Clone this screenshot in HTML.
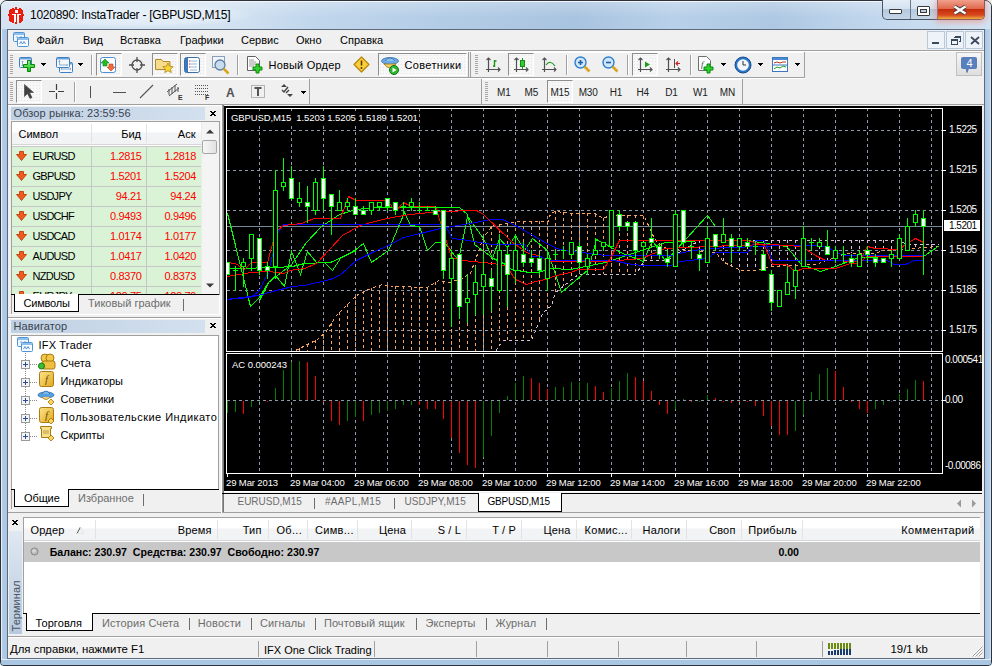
<!DOCTYPE html><html><head><meta charset="utf-8"><style>
html,body{margin:0;padding:0;width:992px;height:666px;overflow:hidden;background:#f0f0f0}
body{position:relative;font-family:"Liberation Sans",sans-serif}
div{position:absolute;box-sizing:border-box}
.t{white-space:nowrap}
svg{position:absolute;overflow:visible}
</style></head><body>

<div style="left:0px;top:0px;width:992px;height:666px;background:#b0cbe6;border:1px solid #2e3238;border-radius:7px 7px 4px 4px"></div>
<div style="left:1px;top:1px;width:990px;height:28px;background:linear-gradient(90deg,#d6e4f2 0%,#d4e3f2 22%,#c0d6ec 32%,#b3cce6 45%,#a9c4e0 58%,#b8d0e9 68%,#aec8e3 78%,#c4d9ee 90%,#d2e3f3 100%);border-radius:6px 6px 0 0;border-top:1px solid #eef4fa"></div>
<div style="left:1px;top:1px;width:990px;height:28px;background:linear-gradient(rgba(255,255,255,0.25),rgba(255,255,255,0) 60%);border-radius:6px 6px 0 0"></div>
<div style="left:20px;top:3px;width:230px;height:24px;background:radial-gradient(ellipse at center,rgba(235,243,250,0.85) 0%,rgba(235,243,250,0.5) 55%,rgba(235,243,250,0) 75%)"></div>
<div style="left:1px;top:29px;width:6px;height:630px;background:linear-gradient(90deg,#e6f0f8 0 1px,#b2cde8 1px,#a9c6e3)"></div>
<div style="left:985px;top:29px;width:6px;height:630px;background:linear-gradient(90deg,#aac7e4,#b8d2ec 80%,#e0ecf7)"></div>
<div style="left:1px;top:659px;width:990px;height:6px;background:linear-gradient(#e4eef8 0 1px,#a9c6e2 1px);border-radius:0 0 3px 3px"></div>
<div style="left:7px;top:29px;width:978px;height:630px;border:1px solid #5c6a7c;background:#f0f0f0"></div>
<div class="t" style="left:30px;top:8.84px;font-size:12px;line-height:12px;color:#000;letter-spacing:-0.25px">1020890: InstaTrader - [GBPUSD,M15]</div>
<svg width="20" height="20" style="left:6px;top:5px" shape-rendering="crispEdges"><g fill="#ec1c0c"><rect x="4" y="4" width="12" height="13"/><rect x="3" y="6" width="14" height="9"/><rect x="2" y="9" width="16" height="2"/><rect x="9" y="2" width="2" height="2"/><rect x="6" y="3" width="2" height="1"/><rect x="13" y="3" width="2" height="1"/><rect x="9" y="17" width="2" height="2"/><rect x="6" y="17" width="2" height="1"/><rect x="13" y="17" width="2" height="1"/><rect x="3" y="5" width="1" height="1"/><rect x="16" y="5" width="1" height="1"/><rect x="3" y="15" width="1" height="1"/><rect x="16" y="15" width="1" height="1"/></g><g fill="#fff"><rect x="9" y="5" width="3" height="3"/><rect x="6" y="9" width="4" height="1"/><rect x="11" y="9" width="4" height="1"/><rect x="8" y="10" width="2" height="7"/><rect x="11" y="10" width="2" height="7"/></g></svg>
<div style="left:882px;top:0px;width:103px;height:20px;border:1px solid #4a5566;border-top:none;border-radius:0 0 5px 5px;overflow:hidden;background:linear-gradient(#e4edf7 0%,#d5e2f0 45%,#b6c9dd 50%,#c5d6e8 100%)"></div>
<div style="left:910px;top:0px;width:1px;height:19px;background:#6a7a8c"></div>
<div style="left:937px;top:0px;width:1px;height:19px;background:#6a7a8c"></div>
<div style="left:938px;top:0px;width:46px;height:19px;background:linear-gradient(#f2a08c 0%,#e06a4e 45%,#c62c0c 50%,#d84a20 80%,#f0b040 100%);border-radius:0 0 4px 0;box-shadow:0 1px 6px 2px rgba(255,110,80,0.5)"></div>
<svg width="14" height="10" style="left:953px;top:5px"><path d="M1.5 1.5l11 7M12.5 1.5l-11 7" stroke="#3a3a3a" stroke-width="4"/><path d="M1.5 1.5l11 7M12.5 1.5l-11 7" stroke="#fff" stroke-width="2.4"/></svg>
<div style="left:889px;top:9px;width:13px;height:5px;background:#fff;border:1px solid #3a3a3a;border-radius:1px"></div>
<div style="left:917px;top:6px;width:13px;height:10px;background:#fff;border:1px solid #3a3a3a;border-radius:1px"></div>
<div style="left:920px;top:9px;width:7px;height:4px;background:#b8cde2;border:1px solid #3a3a3a"></div>
<div style="left:927px;top:31px;width:18px;height:18px;border:1px solid #b5c8dc;background:#eef3f9"></div>
<div style="left:946px;top:31px;width:18px;height:18px;border:1px solid #b5c8dc;background:#eef3f9"></div>
<div style="left:965px;top:31px;width:18px;height:18px;border:1px solid #b5c8dc;background:#eef3f9"></div>
<div style="left:932px;top:42px;width:7px;height:2px;background:#3a4a5a"></div>
<svg width="10" height="9" style="left:951px;top:36px" shape-rendering="crispEdges"><path d="M3.5 0.5h6v5h-2M0.5 3.5h6v5h-6z" stroke="#3a4a5a" fill="none"/><path d="M3 1h6M0 4h6" stroke="#3a4a5a"/></svg>
<svg width="10" height="9" style="left:970px;top:36px"><path d="M1 1l8 7M9 1l-8 7" stroke="#3a4a5a" stroke-width="1.8"/></svg>
<svg width="16" height="15" style="left:13px;top:32px" viewBox="0 0 16 15"><rect x="0.5" y="0.5" width="11" height="9" rx="1" fill="#eef6fd" stroke="#4f93d6"/><rect x="1" y="1" width="10" height="2" fill="#8ec0ee"/><path d="M3 5h2M7 5h2" stroke="#6a9ad0" stroke-width="0.8"/><rect x="4.5" y="5.5" width="11" height="9" rx="1" fill="#f6fbff" stroke="#4f93d6"/><rect x="5" y="6" width="10" height="2" fill="#8ec0ee"/><path d="M6.5 12l1.5-2.5 1.5 2.5 1.5-2.5 1.5 2.5" stroke="#3a78c0" fill="none" stroke-width="0.8"/></svg>
<div class="t" style="left:36.5px;top:34.69px;font-size:11px;line-height:11px;color:#000;">Файл</div>
<div class="t" style="left:83px;top:34.69px;font-size:11px;line-height:11px;color:#000;">Вид</div>
<div class="t" style="left:120px;top:34.69px;font-size:11px;line-height:11px;color:#000;">Вставка</div>
<div class="t" style="left:180px;top:34.69px;font-size:11px;line-height:11px;color:#000;">Графики</div>
<div class="t" style="left:241px;top:34.69px;font-size:11px;line-height:11px;color:#000;">Сервис</div>
<div class="t" style="left:296px;top:34.69px;font-size:11px;line-height:11px;color:#000;">Окно</div>
<div class="t" style="left:340px;top:34.69px;font-size:11px;line-height:11px;color:#000;">Справка</div>
<div style="left:8px;top:50px;width:976px;height:1px;background:#a0a0a0"></div>
<div style="left:8px;top:51px;width:976px;height:1px;background:#fff"></div>
<div style="left:8px;top:77px;width:797px;height:1px;background:#a0a0a0"></div>
<div style="left:8px;top:78px;width:797px;height:1px;background:#fff"></div>
<div style="left:8px;top:104px;width:976px;height:1px;background:#a0a0a0"></div>
<div style="left:9px;top:52px;width:460px;height:1px;background:#fff"></div>
<div style="left:468px;top:52px;width:1px;height:25px;background:#a0a0a0"></div>
<div style="left:10px;top:55px;width:3px;height:20px;background:repeating-linear-gradient(#a8a8a8 0 1px,transparent 1px 2px)"></div>
<svg width="18" height="16" style="left:19px;top:57px" viewBox="0 0 18 16"><defs><linearGradient id="gp" x1="0" y1="0" x2="0" y2="1"><stop offset="0" stop-color="#8ef58e"/><stop offset="1" stop-color="#12c012"/></linearGradient></defs><rect x="0.5" y="0.5" width="12" height="10" rx="1" fill="#f4f8fc" stroke="#3b7fc4"/><rect x="1" y="1" width="11" height="1.5" fill="#6aa2dc"/><path d="M3.5 4v5M2.5 5l1-1 1 1M2.5 8l1 1 1-1" stroke="#7f9cbc" stroke-width="0.8" fill="none"/><path d="M8.5 3.5h3v4h4v3h-4v4h-3v-4h-4v-3h4z" fill="url(#gp)" stroke="#0b850b"/></svg>
<svg width="6" height="4" style="left:41px;top:63px" shape-rendering="crispEdges"><path d="M0 0h5v1h-1v1h-1v1h-1v-1h-1v-1h-1z" fill="#000"/></svg>
<svg width="18" height="17" style="left:56px;top:57px" viewBox="0 0 18 17"><rect x="3.5" y="5.5" width="13" height="10" rx="1" fill="#f4f8fc" stroke="#3b7fc4"/><rect x="4" y="6" width="12" height="1.5" fill="#6aa2dc"/><path d="M5 12h10M6 11l-1 1 1 1M14 11l1 1-1 1" stroke="#7f9cbc" stroke-width="0.8" fill="none"/><rect x="0.5" y="0.5" width="13" height="10" rx="1" fill="#f4f8fc" stroke="#3b7fc4"/><rect x="1" y="1" width="12" height="1.5" fill="#6aa2dc"/><path d="M3.5 3.5v4.5h8M2.5 4.5l1-1 1 1M10.5 7l1 1-1 1" stroke="#7f9cbc" stroke-width="0.8" fill="none"/></svg>
<svg width="6" height="4" style="left:78px;top:63px" shape-rendering="crispEdges"><path d="M0 0h5v1h-1v1h-1v1h-1v-1h-1v-1h-1z" fill="#000"/></svg>
<div style="left:91px;top:55px;width:1px;height:20px;background:#a0a0a0"></div>
<div style="left:92px;top:55px;width:1px;height:20px;background:#fff"></div>
<div style="left:96px;top:53px;width:26px;height:23px;border-top:1px solid #8d8d8d;border-left:1px solid #8d8d8d;border-right:1px solid #fff;border-bottom:1px solid #fff;background-color:#f7f7f7;background-image:radial-gradient(#e6e6e6 0.7px,transparent 0.8px);background-size:3px 3px"></div>
<svg width="17" height="16" style="left:100px;top:57px" viewBox="0 0 17 16"><rect x="0.5" y="0.5" width="15" height="15" rx="2" fill="#fff" stroke="#4a90d9"/><path d="M5 2l4 4h-2v3h-4v-3h-2z" fill="#22bb22" stroke="#118811" stroke-width="0.6"/><path d="M11 14l4-4h-2v-3h-4v3h-2z" fill="#f06a3a" stroke="#c04010" stroke-width="0.6"/></svg>
<svg width="16" height="16" style="left:129px;top:57px" viewBox="0 0 16 16"><circle cx="8" cy="8" r="5" fill="none" stroke="#505050" stroke-width="1.3"/><path d="M8 0v5M8 11v5M0 8h5M11 8h5" stroke="#505050" stroke-width="1.3"/></svg>
<div style="left:152px;top:53px;width:26px;height:23px;border-top:1px solid #8d8d8d;border-left:1px solid #8d8d8d;border-right:1px solid #fff;border-bottom:1px solid #fff;background-color:#f7f7f7;background-image:radial-gradient(#e6e6e6 0.7px,transparent 0.8px);background-size:3px 3px"></div>
<svg width="20" height="18" style="left:155px;top:56px" viewBox="0 0 20 18"><path d="M0.5 3.5h6l1.5 2h7v8h-14.5z" fill="#f6dc8a" stroke="#b08a2a"/><path d="M13 7l1.6 3.3 3.6.4-2.7 2.4.8 3.5-3.3-1.8-3.2 1.8.7-3.5-2.7-2.4 3.6-.4z" fill="#f7d33a" stroke="#b08a10" stroke-width="0.8"/></svg>
<div style="left:180px;top:53px;width:26px;height:23px;border-top:1px solid #8d8d8d;border-left:1px solid #8d8d8d;border-right:1px solid #fff;border-bottom:1px solid #fff;background-color:#f7f7f7;background-image:radial-gradient(#e6e6e6 0.7px,transparent 0.8px);background-size:3px 3px"></div>
<svg width="17" height="16" style="left:184px;top:57px" viewBox="0 0 17 16"><rect x="0.5" y="0.5" width="15" height="15" rx="2" fill="#fff" stroke="#3a6ea5"/><rect x="1" y="1" width="3" height="14" fill="#3a78c0"/><path d="M6 4h7M6 7h7M6 10h7M6 13h7" stroke="#7aa2cc" stroke-width="0.8"/><path d="M5 4h1M5 7h1M5 10h1" stroke="#d03030"/></svg>
<svg width="19" height="19" style="left:212px;top:56px" viewBox="0 0 19 19"><rect x="0.5" y="0.5" width="12" height="11" fill="#f0f4f8" stroke="#8aa0b8"/><circle cx="8" cy="9" r="5" fill="#c8dcef" stroke="#5f7f9f" stroke-width="1.3"/><path d="M11.5 12.5l5 5" stroke="#d9a520" stroke-width="2.5"/></svg>
<div style="left:237px;top:55px;width:1px;height:20px;background:#a0a0a0"></div>
<div style="left:238px;top:55px;width:1px;height:20px;background:#fff"></div>
<svg width="18" height="19" style="left:247px;top:56px" viewBox="0 0 18 19"><path d="M0.5 0.5h8l4 4v10h-12z" fill="#fff" stroke="#606060"/><path d="M2 4h5M2 6h7M2 8h7M2 10h5" stroke="#808080" stroke-width="0.8"/><path d="M9 8h3v3h3v3h-3v3h-3v-3h-3v-3h3z" fill="#2ed12e" stroke="#0d8a0d"/></svg>
<div class="t" style="left:268.5px;top:59.69px;font-size:11px;line-height:11px;color:#000;letter-spacing:0.2px">Новый Ордер</div>
<svg width="17" height="17" style="left:353px;top:56px" viewBox="0 0 17 17"><path d="M8.5 1L16 8.5 8.5 16 1 8.5z" fill="#f8cf3a" stroke="#b8860b" stroke-width="1.2" stroke-linejoin="round"/><path d="M8.5 4.5v5" stroke="#5a3a00" stroke-width="1.6"/><circle cx="8.5" cy="12" r="1" fill="#5a3a00"/></svg>
<div style="left:378px;top:53px;width:89px;height:23px;border-top:1px solid #8d8d8d;border-left:1px solid #8d8d8d;border-right:1px solid #fff;border-bottom:1px solid #fff;background-color:#f7f7f7;background-image:radial-gradient(#e6e6e6 0.7px,transparent 0.8px);background-size:3px 3px"></div>
<svg width="19" height="19" style="left:381px;top:56px" viewBox="0 0 19 19"><ellipse cx="9" cy="5" rx="8.5" ry="3.5" fill="#6aaae8" stroke="#3a70a8" stroke-width="0.8"/><path d="M4 5q5-6 10 0" fill="#8cc0f0" stroke="#3a70a8" stroke-width="0.8"/><path d="M3 8q6 8 12 0z" fill="#f2cf6a" stroke="#a07810" stroke-width="0.8"/><circle cx="13" cy="14" r="4.5" fill="#2cb82c" stroke="#127012"/><path d="M11.5 11.5v5l4-2.5z" fill="#fff"/></svg>
<div class="t" style="left:404.5px;top:59.69px;font-size:11px;line-height:11px;color:#000;letter-spacing:0.35px">Советники</div>
<div style="left:470px;top:52px;width:335px;height:1px;background:#fff"></div>
<div style="left:470px;top:52px;width:1px;height:25px;background:#a0a0a0"></div>
<div style="left:804px;top:52px;width:1px;height:25px;background:#a0a0a0"></div>
<div style="left:475px;top:55px;width:3px;height:20px;background:repeating-linear-gradient(#a8a8a8 0 1px,transparent 1px 2px)"></div>
<svg width="16" height="16" style="left:485px;top:57px" viewBox="0 0 16 16"><path d="M3.5 1v14M1 12.5h14" stroke="#505050" stroke-width="1.2"/><path d="M1.5 3l2-2 2 2M13 10.5l2 2-2 2" stroke="#505050" fill="none" stroke-width="1.1"/><path d="M9.5 3v7M8 9h1.5M9.5 4h2" stroke="#1a9a1a" stroke-width="1.4"/></svg>
<div style="left:508px;top:53px;width:26px;height:23px;border-top:1px solid #8d8d8d;border-left:1px solid #8d8d8d;border-right:1px solid #fff;border-bottom:1px solid #fff;background-color:#f7f7f7;background-image:radial-gradient(#e6e6e6 0.7px,transparent 0.8px);background-size:3px 3px"></div>
<svg width="16" height="16" style="left:513px;top:57px" viewBox="0 0 16 16"><path d="M3.5 1v14M1 12.5h14" stroke="#505050" stroke-width="1.2"/><path d="M1.5 3l2-2 2 2M13 10.5l2 2-2 2" stroke="#505050" fill="none" stroke-width="1.1"/><path d="M9.5 1v11" stroke="#1a9a1a"/><rect x="7.5" y="3.5" width="4" height="6" fill="#2cd02c" stroke="#1a8a1a"/></svg>
<svg width="16" height="16" style="left:541px;top:57px" viewBox="0 0 16 16"><path d="M3.5 1v14M1 12.5h14" stroke="#505050" stroke-width="1.2"/><path d="M1.5 3l2-2 2 2M13 10.5l2 2-2 2" stroke="#505050" fill="none" stroke-width="1.1"/><path d="M5 8q4-6 9 1" stroke="#1a9a1a" fill="none" stroke-width="1.2"/></svg>
<div style="left:566px;top:55px;width:1px;height:20px;background:#a0a0a0"></div>
<div style="left:567px;top:55px;width:1px;height:20px;background:#fff"></div>
<svg width="17" height="18" style="left:574px;top:56px" viewBox="0 0 17 18"><circle cx="6.5" cy="6.5" r="5.5" fill="#cfe6fb" stroke="#2f7fcf" stroke-width="1.4"/><path d="M4 6.5h5M6.5 4v5" stroke="#1f5f9f" stroke-width="1.6"/><path d="M10.5 10.5l5 5" stroke="#d9a520" stroke-width="2.6"/></svg>
<svg width="17" height="18" style="left:602px;top:56px" viewBox="0 0 17 18"><circle cx="6.5" cy="6.5" r="5.5" fill="#cfe6fb" stroke="#2f7fcf" stroke-width="1.4"/><path d="M4 6.5h5" stroke="#1f5f9f" stroke-width="1.6"/><path d="M10.5 10.5l5 5" stroke="#d9a520" stroke-width="2.6"/></svg>
<div style="left:627px;top:55px;width:1px;height:20px;background:#a0a0a0"></div>
<div style="left:628px;top:55px;width:1px;height:20px;background:#fff"></div>
<div style="left:632px;top:53px;width:26px;height:23px;border-top:1px solid #8d8d8d;border-left:1px solid #8d8d8d;border-right:1px solid #fff;border-bottom:1px solid #fff;background-color:#f7f7f7;background-image:radial-gradient(#e6e6e6 0.7px,transparent 0.8px);background-size:3px 3px"></div>
<svg width="16" height="16" style="left:637px;top:57px" viewBox="0 0 16 16"><path d="M3.5 1v14M1 12.5h14" stroke="#505050" stroke-width="1.2"/><path d="M1.5 3l2-2 2 2M13 10.5l2 2-2 2" stroke="#505050" fill="none" stroke-width="1.1"/><path d="M8 4.5l5 3-5 3z" fill="#1aa01a"/></svg>
<svg width="16" height="16" style="left:665px;top:57px" viewBox="0 0 16 16"><path d="M3.5 1v14M1 12.5h14" stroke="#505050" stroke-width="1.2"/><path d="M1.5 3l2-2 2 2M13 10.5l2 2-2 2" stroke="#505050" fill="none" stroke-width="1.1"/><path d="M9.5 2v9" stroke="#505050"/><path d="M15 6.5h-4M13 4.5l-2 2 2 2" stroke="#d02020" fill="none" stroke-width="1.1"/></svg>
<div style="left:690px;top:55px;width:1px;height:20px;background:#a0a0a0"></div>
<div style="left:691px;top:55px;width:1px;height:20px;background:#fff"></div>
<svg width="18" height="19" style="left:698px;top:56px" viewBox="0 0 18 19"><path d="M0.5 0.5h8l4 4v10h-12z" fill="#fff" stroke="#707070"/><text x="3" y="11" font-size="9" font-style="italic" font-family="Liberation Serif" fill="#404040">f</text><path d="M9 8h3v3h3v3h-3v3h-3v-3h-3v-3h3z" fill="#2ed12e" stroke="#0d8a0d"/></svg>
<svg width="6" height="4" style="left:721px;top:63px" shape-rendering="crispEdges"><path d="M0 0h5v1h-1v1h-1v1h-1v-1h-1v-1h-1z" fill="#000"/></svg>
<svg width="18" height="18" style="left:734px;top:56px" viewBox="0 0 18 18"><circle cx="9" cy="9" r="8" fill="#2a78c8" stroke="#1a4a8a"/><circle cx="9" cy="9" r="5.8" fill="#f2f6fa"/><path d="M9 5v4h3" stroke="#333" stroke-width="1" fill="none"/></svg>
<svg width="6" height="4" style="left:758px;top:63px" shape-rendering="crispEdges"><path d="M0 0h5v1h-1v1h-1v1h-1v-1h-1v-1h-1z" fill="#000"/></svg>
<svg width="17" height="16" style="left:772px;top:57px" viewBox="0 0 17 16"><rect x="0.5" y="0.5" width="15" height="14" fill="#fff" stroke="#3a78c0"/><rect x="1" y="1" width="14" height="2" fill="#4a8ad0"/><path d="M1 8h14" stroke="#3a78c0"/><path d="M2 6l3-1 3 1 3-1 3 0" stroke="#c03020" fill="none"/><path d="M2 12l3-2 3 1 3-2 3 1" stroke="#20a020" fill="none"/></svg>
<svg width="6" height="4" style="left:795px;top:63px" shape-rendering="crispEdges"><path d="M0 0h5v1h-1v1h-1v1h-1v-1h-1v-1h-1z" fill="#000"/></svg>
<div style="left:956px;top:52px;width:26px;height:24px;background:linear-gradient(#f6f6f6,#dedede);border:1px solid #c0c0c0"></div>
<svg width="18" height="18" style="left:960px;top:56px" viewBox="0 0 18 18"><path d="M2.5 1.5h13a1 1 0 0 1 1 1v9a1 1 0 0 1-1 1h-7l-1.5 4-1-4h-3.5a1 1 0 0 1-1-1v-9a1 1 0 0 1 1-1z" fill="#5a7fbd" stroke="#4a6fad" stroke-width="0.8"/><text x="9.5" y="11" font-size="11" font-family="Liberation Sans" fill="#fff" text-anchor="middle">4</text></svg>
<div style="left:9px;top:79px;width:301px;height:1px;background:#fff"></div>
<div style="left:309px;top:79px;width:1px;height:25px;background:#a0a0a0"></div>
<div style="left:10px;top:82px;width:3px;height:20px;background:repeating-linear-gradient(#a8a8a8 0 1px,transparent 1px 2px)"></div>
<div style="left:16px;top:80px;width:26px;height:23px;border-top:1px solid #8d8d8d;border-left:1px solid #8d8d8d;border-right:1px solid #fff;border-bottom:1px solid #fff;background-color:#f7f7f7;background-image:radial-gradient(#e6e6e6 0.7px,transparent 0.8px);background-size:3px 3px"></div>
<svg width="9" height="15" style="left:24px;top:84px" viewBox="0 0 9 15"><path d="M0.5 0.5v12l3-3 2.5 5 2-1-2.5-5h4z" fill="#404040" stroke="#404040" stroke-width="0.6"/></svg>
<svg width="17" height="15" style="left:48px;top:84px" viewBox="0 0 17 15"><path d="M8.5 0v6M8.5 9v6M1 7.5h6M10 7.5h6" stroke="#404040" stroke-width="1.2"/></svg>
<div style="left:74px;top:82px;width:1px;height:20px;background:#a0a0a0"></div>
<div style="left:75px;top:82px;width:1px;height:20px;background:#fff"></div>
<div style="left:90px;top:86px;width:1px;height:12px;background:#505050"></div>
<div style="left:113px;top:92px;width:13px;height:1px;background:#505050"></div>
<svg width="15" height="15" style="left:139px;top:84px" viewBox="0 0 15 15"><path d="M1 14L14 1" stroke="#555" stroke-width="1.1"/></svg>
<svg width="18" height="18" style="left:166px;top:83px" viewBox="0 0 18 18"><path d="M1 9L11 1M3 13L13 5M3 6v6M6 4v7M9 2v7M12 4v5" stroke="#555" stroke-width="1"/><text x="12" y="17" font-size="7" font-weight="bold" font-family="Liberation Sans" fill="#333">E</text></svg>
<svg width="17" height="17" style="left:194px;top:84px" viewBox="0 0 17 17"><path d="M1 1.5h13M1 4.5h13M1 7.5h13M1 10.5h13" stroke="#555" stroke-dasharray="1 1"/><text x="11" y="16" font-size="7" font-weight="bold" font-family="Liberation Sans" fill="#333">F</text></svg>
<div class="t" style="left:226px;top:86.84px;font-size:12px;line-height:12px;color:#505050;font-weight:bold">A</div>
<svg width="15" height="15" style="left:251px;top:84px" viewBox="0 0 15 15"><rect x="0.5" y="1.5" width="13" height="12" fill="none" stroke="#777" stroke-dasharray="1 1"/><path d="M3.5 4h7M7 4v8" stroke="#555" stroke-width="2"/></svg>
<svg width="15" height="15" style="left:280px;top:84px" viewBox="0 0 15 15"><path d="M1 3l3-3 3 3z M7 10l3 3 3-3z" fill="#444"/><path d="M2 6l2 2 4-5M6 9l3-3" stroke="#444" stroke-width="1.4" fill="none"/></svg>
<svg width="6" height="4" style="left:301px;top:91px" shape-rendering="crispEdges"><path d="M0 0h5v1h-1v1h-1v1h-1v-1h-1v-1h-1z" fill="#000"/></svg>
<div style="left:481px;top:79px;width:262px;height:1px;background:#fff"></div>
<div style="left:481px;top:79px;width:1px;height:25px;background:#a0a0a0"></div>
<div style="left:742px;top:79px;width:1px;height:25px;background:#a0a0a0"></div>
<div style="left:485px;top:82px;width:3px;height:20px;background:repeating-linear-gradient(#a8a8a8 0 1px,transparent 1px 2px)"></div>
<div style="left:547px;top:80px;width:26px;height:23px;border-top:1px solid #8d8d8d;border-left:1px solid #8d8d8d;border-right:1px solid #fff;border-bottom:1px solid #fff;background-color:#f7f7f7;background-image:radial-gradient(#e6e6e6 0.7px,transparent 0.8px);background-size:3px 3px"></div>
<div class="t" style="left:497px;top:87.83px;font-size:10px;line-height:10px;color:#222;letter-spacing:-0.2px">M1</div>
<div class="t" style="left:524.5px;top:87.83px;font-size:10px;line-height:10px;color:#222;letter-spacing:-0.2px">M5</div>
<div class="t" style="left:550.4px;top:87.83px;font-size:10px;line-height:10px;color:#222;letter-spacing:-0.2px">M15</div>
<div class="t" style="left:578.7px;top:87.83px;font-size:10px;line-height:10px;color:#222;letter-spacing:-0.2px">M30</div>
<div class="t" style="left:609.7px;top:87.83px;font-size:10px;line-height:10px;color:#222;letter-spacing:-0.2px">H1</div>
<div class="t" style="left:636.5px;top:87.83px;font-size:10px;line-height:10px;color:#222;letter-spacing:-0.2px">H4</div>
<div class="t" style="left:665.3px;top:87.83px;font-size:10px;line-height:10px;color:#222;letter-spacing:-0.2px">D1</div>
<div class="t" style="left:693px;top:87.83px;font-size:10px;line-height:10px;color:#222;letter-spacing:-0.2px">W1</div>
<div class="t" style="left:719.8px;top:87.83px;font-size:10px;line-height:10px;color:#222;letter-spacing:-0.2px">MN</div>
<div style="left:8px;top:105px;width:214px;height:212px;background:#f0f0f0;border-top:1px solid #fff"></div>
<div style="left:221px;top:105px;width:1px;height:408px;background:#fff"></div>
<div style="left:222px;top:105px;width:2px;height:408px;background:linear-gradient(90deg,#b8b8b8,#6a6a6a)"></div>
<div style="left:11px;top:294px;width:1px;height:20px;background:#a0a0a0"></div>
<div style="left:219px;top:294px;width:1px;height:21px;background:#fff"></div>
<div style="left:11px;top:314px;width:209px;height:1px;background:#fff"></div>
<div style="left:11px;top:107px;width:194px;height:13px;background:linear-gradient(90deg,#bfd0e3,#d3e0ee)"></div>
<div class="t" style="left:13.5px;top:107.69px;font-size:11px;line-height:11px;color:#3a4350;letter-spacing:0.1px">Обзор рынка: 23:59:56</div>
<svg width="6" height="5" style="left:210px;top:111px" shape-rendering="crispEdges"><g fill="#000"><rect x="0" y="0" width="1" height="1"/><rect x="1" y="0" width="1" height="1"/><rect x="4" y="0" width="1" height="1"/><rect x="5" y="0" width="1" height="1"/><rect x="1" y="1" width="1" height="1"/><rect x="2" y="1" width="1" height="1"/><rect x="3" y="1" width="1" height="1"/><rect x="4" y="1" width="1" height="1"/><rect x="2" y="2" width="1" height="1"/><rect x="3" y="2" width="1" height="1"/><rect x="1" y="3" width="1" height="1"/><rect x="2" y="3" width="1" height="1"/><rect x="3" y="3" width="1" height="1"/><rect x="4" y="3" width="1" height="1"/><rect x="0" y="4" width="1" height="1"/><rect x="1" y="4" width="1" height="1"/><rect x="4" y="4" width="1" height="1"/><rect x="5" y="4" width="1" height="1"/></g></svg>
<div style="left:11px;top:121px;width:209px;height:174px;border:1px solid #a0a0a0;border-bottom:none;background:#fff"></div>
<div style="left:12px;top:122px;width:189px;height:22px;background:linear-gradient(#ffffff 0%,#ffffff 45%,#f2f3f5 50%,#f2f3f5 100%)"></div>
<div style="left:91px;top:124px;width:1px;height:19px;background:#e3e3e3"></div>
<div style="left:146px;top:124px;width:1px;height:19px;background:#e3e3e3"></div>
<div style="left:12px;top:144px;width:189px;height:1px;background:#d5d5d5"></div>
<div style="left:12px;top:146px;width:189px;height:1px;background:#c8c8c8"></div>
<div class="t" style="left:18.5px;top:129.19px;font-size:11px;line-height:11px;color:#000;">Символ</div>
<div class="t" style="right:851px;top:129.19px;font-size:11px;line-height:11px;color:#000;">Бид</div>
<div class="t" style="right:796.5px;top:129.19px;font-size:11px;line-height:11px;color:#000;">Аск</div>
<div style="left:12px;top:147px;width:189px;height:147px;overflow:hidden">
<div style="left:0;top:0px;width:189px;height:19px;background:#daf3d6"></div>
<div style="left:0;top:19px;width:189px;height:1px;background:#c4c8c4"></div>
<div style="left:79px;top:0px;width:1px;height:19px;background:#c4c8c4"></div>
<div style="left:134px;top:0px;width:1px;height:19px;background:#c4c8c4"></div>
<svg width="11" height="10" style="left:4px;top:4px" viewBox="0 0 11 10"><path d="M3.5 0.5H7.5V3.5H10.5L5.5 9.5L0.5 3.5H3.5Z" fill="#f05a1e" stroke="#b83200" stroke-width="0.8" stroke-linejoin="round"/></svg>
<div class="t" style="left:20.5px;top:3.99px;font-size:11px;line-height:11px;color:#000;letter-spacing:-0.7px">EURUSD</div>
<div class="t" style="right:59.5px;top:3.99px;font-size:11px;line-height:11px;color:#f00;letter-spacing:-0.35px">1.2815</div>
<div class="t" style="right:5px;top:3.99px;font-size:11px;line-height:11px;color:#f00;letter-spacing:-0.35px">1.2818</div>
<div style="left:0;top:20px;width:189px;height:19px;background:#daf3d6"></div>
<div style="left:0;top:39px;width:189px;height:1px;background:#c4c8c4"></div>
<div style="left:79px;top:20px;width:1px;height:19px;background:#c4c8c4"></div>
<div style="left:134px;top:20px;width:1px;height:19px;background:#c4c8c4"></div>
<svg width="11" height="10" style="left:4px;top:24px" viewBox="0 0 11 10"><path d="M3.5 0.5H7.5V3.5H10.5L5.5 9.5L0.5 3.5H3.5Z" fill="#f05a1e" stroke="#b83200" stroke-width="0.8" stroke-linejoin="round"/></svg>
<div class="t" style="left:20.5px;top:23.99px;font-size:11px;line-height:11px;color:#000;letter-spacing:-0.7px">GBPUSD</div>
<div class="t" style="right:59.5px;top:23.99px;font-size:11px;line-height:11px;color:#f00;letter-spacing:-0.35px">1.5201</div>
<div class="t" style="right:5px;top:23.99px;font-size:11px;line-height:11px;color:#f00;letter-spacing:-0.35px">1.5204</div>
<div style="left:0;top:40px;width:189px;height:19px;background:#daf3d6"></div>
<div style="left:0;top:59px;width:189px;height:1px;background:#c4c8c4"></div>
<div style="left:79px;top:40px;width:1px;height:19px;background:#c4c8c4"></div>
<div style="left:134px;top:40px;width:1px;height:19px;background:#c4c8c4"></div>
<svg width="11" height="10" style="left:4px;top:44px" viewBox="0 0 11 10"><path d="M3.5 0.5H7.5V3.5H10.5L5.5 9.5L0.5 3.5H3.5Z" fill="#f05a1e" stroke="#b83200" stroke-width="0.8" stroke-linejoin="round"/></svg>
<div class="t" style="left:20.5px;top:43.99px;font-size:11px;line-height:11px;color:#000;letter-spacing:-0.7px">USDJPY</div>
<div class="t" style="right:59.5px;top:43.99px;font-size:11px;line-height:11px;color:#f00;letter-spacing:-0.35px">94.21</div>
<div class="t" style="right:5px;top:43.99px;font-size:11px;line-height:11px;color:#f00;letter-spacing:-0.35px">94.24</div>
<div style="left:0;top:60px;width:189px;height:19px;background:#daf3d6"></div>
<div style="left:0;top:79px;width:189px;height:1px;background:#c4c8c4"></div>
<div style="left:79px;top:60px;width:1px;height:19px;background:#c4c8c4"></div>
<div style="left:134px;top:60px;width:1px;height:19px;background:#c4c8c4"></div>
<svg width="11" height="10" style="left:4px;top:64px" viewBox="0 0 11 10"><path d="M3.5 0.5H7.5V3.5H10.5L5.5 9.5L0.5 3.5H3.5Z" fill="#f05a1e" stroke="#b83200" stroke-width="0.8" stroke-linejoin="round"/></svg>
<div class="t" style="left:20.5px;top:63.99px;font-size:11px;line-height:11px;color:#000;letter-spacing:-0.7px">USDCHF</div>
<div class="t" style="right:59.5px;top:63.99px;font-size:11px;line-height:11px;color:#f00;letter-spacing:-0.35px">0.9493</div>
<div class="t" style="right:5px;top:63.99px;font-size:11px;line-height:11px;color:#f00;letter-spacing:-0.35px">0.9496</div>
<div style="left:0;top:80px;width:189px;height:19px;background:#daf3d6"></div>
<div style="left:0;top:99px;width:189px;height:1px;background:#c4c8c4"></div>
<div style="left:79px;top:80px;width:1px;height:19px;background:#c4c8c4"></div>
<div style="left:134px;top:80px;width:1px;height:19px;background:#c4c8c4"></div>
<svg width="11" height="10" style="left:4px;top:84px" viewBox="0 0 11 10"><path d="M3.5 0.5H7.5V3.5H10.5L5.5 9.5L0.5 3.5H3.5Z" fill="#f05a1e" stroke="#b83200" stroke-width="0.8" stroke-linejoin="round"/></svg>
<div class="t" style="left:20.5px;top:83.99px;font-size:11px;line-height:11px;color:#000;letter-spacing:-0.7px">USDCAD</div>
<div class="t" style="right:59.5px;top:83.99px;font-size:11px;line-height:11px;color:#f00;letter-spacing:-0.35px">1.0174</div>
<div class="t" style="right:5px;top:83.99px;font-size:11px;line-height:11px;color:#f00;letter-spacing:-0.35px">1.0177</div>
<div style="left:0;top:100px;width:189px;height:19px;background:#daf3d6"></div>
<div style="left:0;top:119px;width:189px;height:1px;background:#c4c8c4"></div>
<div style="left:79px;top:100px;width:1px;height:19px;background:#c4c8c4"></div>
<div style="left:134px;top:100px;width:1px;height:19px;background:#c4c8c4"></div>
<svg width="11" height="10" style="left:4px;top:104px" viewBox="0 0 11 10"><path d="M3.5 0.5H7.5V3.5H10.5L5.5 9.5L0.5 3.5H3.5Z" fill="#f05a1e" stroke="#b83200" stroke-width="0.8" stroke-linejoin="round"/></svg>
<div class="t" style="left:20.5px;top:103.99px;font-size:11px;line-height:11px;color:#000;letter-spacing:-0.7px">AUDUSD</div>
<div class="t" style="right:59.5px;top:103.99px;font-size:11px;line-height:11px;color:#f00;letter-spacing:-0.35px">1.0417</div>
<div class="t" style="right:5px;top:103.99px;font-size:11px;line-height:11px;color:#f00;letter-spacing:-0.35px">1.0420</div>
<div style="left:0;top:120px;width:189px;height:19px;background:#daf3d6"></div>
<div style="left:0;top:139px;width:189px;height:1px;background:#c4c8c4"></div>
<div style="left:79px;top:120px;width:1px;height:19px;background:#c4c8c4"></div>
<div style="left:134px;top:120px;width:1px;height:19px;background:#c4c8c4"></div>
<svg width="11" height="10" style="left:4px;top:124px" viewBox="0 0 11 10"><path d="M3.5 0.5H7.5V3.5H10.5L5.5 9.5L0.5 3.5H3.5Z" fill="#f05a1e" stroke="#b83200" stroke-width="0.8" stroke-linejoin="round"/></svg>
<div class="t" style="left:20.5px;top:123.99px;font-size:11px;line-height:11px;color:#000;letter-spacing:-0.7px">NZDUSD</div>
<div class="t" style="right:59.5px;top:123.99px;font-size:11px;line-height:11px;color:#f00;letter-spacing:-0.35px">0.8370</div>
<div class="t" style="right:5px;top:123.99px;font-size:11px;line-height:11px;color:#f00;letter-spacing:-0.35px">0.8373</div>
<div style="left:0;top:140px;width:189px;height:19px;background:#daf3d6"></div>
<div style="left:0;top:159px;width:189px;height:1px;background:#c4c8c4"></div>
<div style="left:79px;top:140px;width:1px;height:19px;background:#c4c8c4"></div>
<div style="left:134px;top:140px;width:1px;height:19px;background:#c4c8c4"></div>
<svg width="11" height="10" style="left:4px;top:144px" viewBox="0 0 11 10"><path d="M3.5 0.5H7.5V3.5H10.5L5.5 9.5L0.5 3.5H3.5Z" fill="#f05a1e" stroke="#b83200" stroke-width="0.8" stroke-linejoin="round"/></svg>
<div class="t" style="left:20.5px;top:143.99px;font-size:11px;line-height:11px;color:#000;letter-spacing:-0.7px">EURJPY</div>
<div class="t" style="right:59.5px;top:143.99px;font-size:11px;line-height:11px;color:#f00;letter-spacing:-0.35px">120.75</div>
<div class="t" style="right:5px;top:143.99px;font-size:11px;line-height:11px;color:#f00;letter-spacing:-0.35px">120.79</div>
</div>
<div style="left:201px;top:122px;width:18px;height:172px;background:#f4f4f4;border-left:1px solid #ececec"></div>
<svg width="10" height="6" style="left:205px;top:128px" viewBox="0 0 10 6"><path d="M1 5.5L5 1.5L9 5.5Z" fill="#3c3c3c"/></svg>
<div style="left:202px;top:140px;width:15px;height:14px;background:linear-gradient(90deg,#f6f6f6,#e2e2e2);border:1px solid #a8a8a8;border-radius:2px"></div>
<svg width="10" height="6" style="left:205px;top:283px" viewBox="0 0 10 6"><path d="M1 0.5L5 4.5L9 0.5Z" fill="#3c3c3c"/></svg>
<div style="left:11px;top:294px;width:208px;height:1px;background:#000"></div>
<div style="left:14px;top:294px;width:65px;height:18px;background:#fff;border:1px solid #000;border-top:none"></div>
<div class="t" style="left:23.5px;top:297.69px;font-size:11px;line-height:11px;color:#000;letter-spacing:-0.2px">Символы</div>
<div class="t" style="left:88px;top:297.69px;font-size:11px;line-height:11px;color:#6d6d6d;">Тиковый график</div>
<div style="left:183px;top:299px;width:1px;height:12px;background:#6d6d6d"></div>
<div style="left:8px;top:317px;width:214px;height:1px;background:#a0a0a0"></div>
<div style="left:8px;top:318px;width:214px;height:1px;background:#fff"></div>
<div style="left:11px;top:320px;width:194px;height:13px;background:linear-gradient(90deg,#bfd0e3,#d3e0ee)"></div>
<div class="t" style="left:13.5px;top:321.19px;font-size:11px;line-height:11px;color:#3a4350;letter-spacing:0.1px">Навигатор</div>
<svg width="6" height="5" style="left:210px;top:323px" shape-rendering="crispEdges"><g fill="#000"><rect x="0" y="0" width="1" height="1"/><rect x="1" y="0" width="1" height="1"/><rect x="4" y="0" width="1" height="1"/><rect x="5" y="0" width="1" height="1"/><rect x="1" y="1" width="1" height="1"/><rect x="2" y="1" width="1" height="1"/><rect x="3" y="1" width="1" height="1"/><rect x="4" y="1" width="1" height="1"/><rect x="2" y="2" width="1" height="1"/><rect x="3" y="2" width="1" height="1"/><rect x="1" y="3" width="1" height="1"/><rect x="2" y="3" width="1" height="1"/><rect x="3" y="3" width="1" height="1"/><rect x="4" y="3" width="1" height="1"/><rect x="0" y="4" width="1" height="1"/><rect x="1" y="4" width="1" height="1"/><rect x="4" y="4" width="1" height="1"/><rect x="5" y="4" width="1" height="1"/></g></svg>
<div style="left:11px;top:335px;width:208px;height:155px;border:1px solid #a0a0a0;border-bottom:none;background:#fff"></div>
<svg width="200" height="110" style="left:12px;top:336px" shape-rendering="crispEdges"><path d="M13.5 17V104 M18 28.5H25 M18 46.5H25 M18 64.5H25 M18 82.5H25 M18 100.5H25" stroke="#8a8a8a" stroke-dasharray="1 1" fill="none"/><rect x="9.5" y="24.5" width="8" height="8" fill="#f4f4f4" stroke="#9a9a9a"/><path d="M11 28.5H16 M13.5 26V31" stroke="#2a4a9a"/><rect x="9.5" y="42.5" width="8" height="8" fill="#f4f4f4" stroke="#9a9a9a"/><path d="M11 46.5H16 M13.5 44V49" stroke="#2a4a9a"/><rect x="9.5" y="60.5" width="8" height="8" fill="#f4f4f4" stroke="#9a9a9a"/><path d="M11 64.5H16 M13.5 62V67" stroke="#2a4a9a"/><rect x="9.5" y="78.5" width="8" height="8" fill="#f4f4f4" stroke="#9a9a9a"/><path d="M11 82.5H16 M13.5 80V85" stroke="#2a4a9a"/><rect x="9.5" y="96.5" width="8" height="8" fill="#f4f4f4" stroke="#9a9a9a"/><path d="M11 100.5H16 M13.5 98V103" stroke="#2a4a9a"/></svg>
<svg width="16" height="15" style="left:17px;top:337px" viewBox="0 0 16 15"><rect x="0.5" y="0.5" width="11" height="9" rx="1" fill="#eef6fd" stroke="#4f93d6"/><rect x="1" y="1" width="10" height="2" fill="#8ec0ee"/><path d="M3 5h2M7 5h2" stroke="#6a9ad0" stroke-width="0.8"/><rect x="4.5" y="5.5" width="11" height="9" rx="1" fill="#f6fbff" stroke="#4f93d6"/><rect x="5" y="6" width="10" height="2" fill="#8ec0ee"/><path d="M6.5 12l1.5-2.5 1.5 2.5 1.5-2.5 1.5 2.5" stroke="#3a78c0" fill="none" stroke-width="0.8"/></svg>
<div class="t" style="left:38.5px;top:339.69px;font-size:11px;line-height:11px;color:#000;letter-spacing:0.2px">IFX Trader</div>
<svg width="18" height="17" style="left:38px;top:353px" viewBox="0 0 18 17"><circle cx="7" cy="5" r="4" fill="#f1c74a" stroke="#a87a10"/><circle cx="12" cy="5" r="4" fill="#f1c74a" stroke="#a87a10"/><rect x="4" y="8" width="13" height="8" rx="2" fill="#efc040" stroke="#a87a10"/><circle cx="3.5" cy="13" r="3" fill="#38c030" stroke="#1a7a10"/></svg>
<div class="t" style="left:60.5px;top:358.39px;font-size:11px;line-height:11px;color:#000;">Счета</div>
<svg width="18" height="17" style="left:38px;top:371px" viewBox="0 0 18 17"><defs><linearGradient id="gf38371" x1="0" y1="0" x2="1" y2="1"><stop offset="0" stop-color="#fbe58a"/><stop offset="1" stop-color="#e0a820"/></linearGradient></defs><rect x="1.5" y="0.5" width="14" height="15" rx="2" fill="url(#gf38371)" stroke="#b07a10"/><text x="8.5" y="12" font-size="11" font-style="italic" font-family="Liberation Serif" fill="#7a4a00" text-anchor="middle">f</text></svg>
<div class="t" style="left:60.5px;top:376.29px;font-size:11px;line-height:11px;color:#000;">Индикаторы</div>
<svg width="18" height="17" style="left:38px;top:389px" viewBox="0 0 18 17"><ellipse cx="8" cy="6" rx="8" ry="3" fill="#5aa0e0" stroke="#2a6aa8" stroke-width="0.8"/><path d="M4 5q4-6 8 0" fill="#78b8ee" stroke="#2a6aa8" stroke-width="0.8"/><path d="M4 8q4 5 8 0" fill="#f4d270" stroke="#a87a10" stroke-width="0.8"/><path d="M13 10l3 3-3 3-3-3z" fill="#f7d560" stroke="#a07000" stroke-width="0.8"/></svg>
<div class="t" style="left:60.5px;top:394.29px;font-size:11px;line-height:11px;color:#000;">Советники</div>
<svg width="18" height="17" style="left:38px;top:407px" viewBox="0 0 18 17"><defs><linearGradient id="gf38407" x1="0" y1="0" x2="1" y2="1"><stop offset="0" stop-color="#fbe58a"/><stop offset="1" stop-color="#e0a820"/></linearGradient></defs><rect x="1.5" y="0.5" width="14" height="15" rx="2" fill="url(#gf38407)" stroke="#b07a10"/><text x="8.5" y="12" font-size="11" font-style="italic" font-family="Liberation Serif" fill="#7a4a00" text-anchor="middle">f</text><path d="M13 11l3 3-3 3-3-3z" fill="#f7d560" stroke="#a07000" stroke-width="0.8"/></svg>
<div class="t" style="left:60.5px;top:412.19px;font-size:11px;line-height:11px;color:#000;letter-spacing:0.45px">Пользовательские Индикато</div>
<svg width="18" height="17" style="left:38px;top:425px" viewBox="0 0 18 17"><path d="M2.5 1.5H13.5V3.5H12.5V12.5H3.5V3.5H2.5Z" fill="#f7e08a" stroke="#a87a10"/><path d="M5 6h6M5 8h6" stroke="#b08a30" stroke-width="0.8"/><path d="M13 10l3 3-3 3-3-3z" fill="#f7d560" stroke="#a07000" stroke-width="0.8"/></svg>
<div class="t" style="left:60.5px;top:430.19px;font-size:11px;line-height:11px;color:#000;">Скрипты</div>
<div style="left:11px;top:489px;width:208px;height:1px;background:#000"></div>
<div style="left:14px;top:489px;width:55px;height:18px;background:#fff;border:1px solid #000;border-top:none"></div>
<div class="t" style="left:24px;top:492.69px;font-size:11px;line-height:11px;color:#000;letter-spacing:-0.1px">Общие</div>
<div class="t" style="left:78px;top:492.69px;font-size:11px;line-height:11px;color:#6d6d6d;">Избранное</div>
<div style="left:143px;top:494px;width:1px;height:12px;background:#6d6d6d"></div>
<div style="left:8px;top:512px;width:215px;height:1px;background:#a0a0a0"></div>
<div style="left:11px;top:490px;width:1px;height:19px;background:#a0a0a0"></div>
<div style="left:224px;top:105px;width:760px;height:408px;background:#f0f0f0"></div>
<div style="left:224px;top:106px;width:758px;height:385px;background:#000"></div>
<svg width="992" height="666" style="left:0;top:0" shape-rendering="crispEdges">
<defs><clipPath id="cm"><rect x="227" y="109" width="715" height="242"/></clipPath><clipPath id="ca"><rect x="227" y="354" width="715" height="119"/></clipPath></defs>
<path d="M259.5 108V351 M259.5 354V473 M291.5 108V351 M291.5 354V473 M323.5 108V351 M323.5 354V473 M355.5 108V351 M355.5 354V473 M387.5 108V351 M387.5 354V473 M419.5 108V351 M419.5 354V473 M451.5 108V351 M451.5 354V473 M483.5 108V351 M483.5 354V473 M515.5 108V351 M515.5 354V473 M547.5 108V351 M547.5 354V473 M579.5 108V351 M579.5 354V473 M611.5 108V351 M611.5 354V473 M643.5 108V351 M643.5 354V473 M675.5 108V351 M675.5 354V473 M707.5 108V351 M707.5 354V473 M739.5 108V351 M739.5 354V473 M771.5 108V351 M771.5 354V473 M803.5 108V351 M803.5 354V473 M835.5 108V351 M835.5 354V473 M867.5 108V351 M867.5 354V473 M899.5 108V351 M899.5 354V473 M931.5 108V351 M931.5 354V473 M227 130.5H942 M227 170.5H942 M227 210.5H942 M227 250.5H942 M227 290.5H942 M227 330.5H942 M227 400.5H942" stroke="#8e9aab" stroke-width="1" stroke-dasharray="3 3" fill="none"/>
<path d="M227 226.5H942" stroke="#778899" stroke-width="1"/>
<g clip-path="url(#cm)">
<path d="M291.5 352V405 M299.5 348V403 M307.5 344V402 M315.5 340V400 M323.5 334V398 M331.5 323V396 M339.5 312V394 M347.5 304V392 M355.5 296V391 M363.5 291V389 M371.5 288V387 M379.5 285V385 M387.5 285V383 M395.5 286V382 M403.5 286V380 M411.5 287V378 M419.5 287V376 M427.5 287V374 M435.5 282V372 M443.5 281V371 M451.5 281V369 M459.5 279V367 M467.5 275V365 M475.5 259V363 M483.5 237V362 M491.5 226V358 M499.5 224V345 M507.5 223V340 M515.5 222V340 M523.5 221V340 M531.5 221V340 M539.5 221V320 M547.5 221V309 M555.5 211V292 M563.5 212V286 M571.5 213V279 M579.5 213V274 M587.5 213V274 M595.5 214V274 M603.5 218V274 M611.5 215V274 M619.5 215V274 M627.5 215V274 M635.5 215V274 M643.5 216V262 M651.5 232V260 M659.5 243V260 M667.5 248V259 M675.5 249V254" stroke="#f4a460" stroke-dasharray="3 3" fill="none"/>
<path d="M683.5 249V249 M691.5 244V250 M699.5 240V251 M707.5 240V251 M715.5 240V252 M723.5 240V261 M731.5 240V266 M739.5 240V269 M747.5 240V270 M755.5 240V270 M763.5 240V268 M771.5 240V266 M779.5 240V266 M787.5 240V265 M795.5 240V265 M803.5 240V265 M811.5 240V264 M819.5 240V263 M827.5 240V260 M835.5 240V257 M843.5 240V254 M851.5 240V253 M859.5 240V253 M867.5 240V253 M875.5 240V252 M883.5 240V250 M891.5 240V250 M899.5 240V249 M907.5 244V248 M915.5 244V248 M923.5 244V247 M931.5 244V247" stroke="#d8bfd8" stroke-dasharray="3 3" fill="none"/>
<polyline points="290.5,353.5 297.5,349.5 317.5,339.5 325.5,332.5 336.5,315.5 356.5,295.5 365.5,290.5 382.5,284.5 393.5,286.5 427.5,287.5 438.5,280.5 449.5,282.5 461.5,278.5 470.5,273.5 483.5,237.5 492.5,225.5 520.5,221.5 548.5,221.5 550.5,213.5 555.5,211.5 571.5,213.5 594.5,213.5 603.5,218.5 609.5,215.5 641.5,215.5 644.5,216.5 652.5,234.5 656.5,241.5 666.5,248.5 690.5,250.5 715.5,252.5 724.5,262.5 736.5,268.5 741.5,270.5 756.5,270.5 762.5,268.5 771.5,266.5 815.5,264.5 846.5,253.5 873.5,253.5 884.5,250.5 899.5,249.5 938.5,246.5" stroke="#f4a460" stroke-dasharray="3 3" fill="none"/>
<polyline points="226.5,420.5 490.5,360.5 494.5,352.5 503.5,340.5 531.5,340.5 534.5,333.5 542.5,313.5 551.5,305.5 555.5,292.5 570.5,280.5 578.5,274.5 635.5,274.5 638.5,270.5 644.5,260.5 666.5,260.5 690.5,245.5 700.5,240.5 899.5,240.5 906.5,244.5 938.5,244.5" stroke="#d8bfd8" stroke-dasharray="3 3" fill="none"/>
<polyline points="226.5,268.5 235.5,268.5 276.5,267.5 292.5,266.5 304.5,263.5 330.5,262.5 356.5,250.5" stroke="#00ff00" stroke-width="1" fill="none"/>
<polyline points="259.5,300.5 268.5,282.5 291.5,264.5 306.5,242.5 321.5,226.5 339.5,214.5 356.5,209.5 374.5,207.5 435.5,207.5 459.5,207.5 467.5,214.5 474.5,244.5 493.5,258.5 505.5,264.5 511.5,269.5 529.5,272.5 538.5,272.5 550.5,268.5 570.5,269.5 605.5,262.5 665.5,242.5 705.5,240.5 747.5,240.5 786.5,246.5 801.5,264.5 815.5,269.5 820.5,271.5 835.5,266.5 858.5,257.5 898.5,256.5 923.5,256.5 939.5,245.5" stroke="#00ff00" stroke-width="1" fill="none"/>
<polyline points="227.5,213.5 235.5,245.5 250.5,306.5 259.5,297.5 268.5,282.5 275.5,275.5 284.5,286.5 291.5,251.5 300.5,274.5 307.5,251.5 316.5,262.5 324.5,262.5 332.5,270.5 340.5,258.5 354.5,250.5 363.5,243.5 371.5,262.5 388.5,250.5 404.5,212.5 410.5,225.5 419.5,226.5 427.5,250.5 435.5,242.5 444.5,242.5 458.5,260.5 467.5,216.5 483.5,238.5 492.5,258.5 499.5,238.5 507.5,247.5 515.5,235.5 524.5,250.5 532.5,238.5 547.5,250.5 561.5,292.5 588.5,269.5 596.5,239.5 620.5,252.5 643.5,261.5 652.5,240.5 665.5,261.5 707.5,215.5 715.5,226.5" stroke="#00ff00" stroke-width="1" fill="none"/>
<polyline points="226.5,299.5 258.5,295.5 272.5,291.5 292.5,286.5 304.5,285.5 330.5,279.5 339.5,275.5 356.5,260.5 374.5,251.5 388.5,245.5 403.5,237.5 420.5,233.5 440.5,228.5 470.5,223.5 490.5,219.5 502.5,219.5 517.5,226.5 541.5,240.5 556.5,248.5 570.5,251.5 591.5,253.5 605.5,255.5 670.5,255.5 683.5,252.5 707.5,248.5 733.5,247.5 756.5,246.5 786.5,245.5 814.5,245.5 828.5,247.5 835.5,252.5 844.5,255.5 923.5,255.5" stroke="#0000ff" stroke-width="1" fill="none"/>
<polyline points="226.5,276.5 251.5,272.5 268.5,271.5 284.5,273.5 289.5,270.5 304.5,268.5 316.5,263.5 330.5,248.5 342.5,235.5 360.5,225.5 374.5,221.5 387.5,218.5 403.5,215.5 419.5,213.5 440.5,211.5 476.5,210.5 483.5,214.5 511.5,241.5 526.5,252.5 541.5,256.5 547.5,261.5 579.5,261.5 605.5,261.5 618.5,260.5 641.5,258.5 665.5,248.5 733.5,245.5 771.5,244.5 801.5,246.5 815.5,255.5 825.5,260.5 859.5,261.5 867.5,246.5 875.5,248.5 899.5,249.5 906.5,243.5 915.5,238.5 923.5,242.5" stroke="#ff0000" stroke-width="1" fill="none"/>
<polyline points="226.5,299.5 250.5,297.5 258.5,291.5 268.5,272.5 274.5,246.5 278.5,231.5 283.5,224.5 440.5,224.5 443.5,222.5 452.5,238.5 468.5,240.5 491.5,244.5 524.5,244.5 532.5,256.5 540.5,256.5 547.5,260.5 614.5,260.5 626.5,263.5 641.5,265.5 670.5,265.5 680.5,261.5 707.5,258.5 715.5,252.5 747.5,252.5 755.5,240.5 764.5,240.5 772.5,260.5 887.5,260.5 893.5,264.5 905.5,264.5 914.5,260.5 923.5,260.5" stroke="#0000ff" stroke-width="1" fill="none"/>
<polyline points="226.5,262.5 235.5,263.5 244.5,269.5 251.5,262.5 267.5,262.5 274.5,236.5 278.5,229.5 283.5,225.5 301.5,223.5 314.5,218.5 340.5,218.5 348.5,196.5 356.5,200.5 387.5,200.5 395.5,211.5 403.5,202.5 411.5,206.5 435.5,206.5 451.5,257.5 462.5,260.5 483.5,262.5 499.5,264.5 506.5,266.5 515.5,279.5 526.5,284.5 535.5,281.5 545.5,279.5 556.5,275.5 570.5,272.5 578.5,269.5 603.5,269.5 611.5,256.5 619.5,240.5 670.5,240.5 747.5,240.5 764.5,245.5 772.5,264.5 786.5,264.5 795.5,271.5 803.5,268.5 835.5,268.5 850.5,263.5 859.5,263.5 866.5,256.5 899.5,256.5 923.5,256.5" stroke="#ff0000" stroke-width="1" fill="none"/>
<path d="M227.5 262V275 M235.5 266V291 M243.5 258V287 M251.5 234V271 M259.5 238V275 M267.5 262V279 M275.5 170V279 M283.5 158V191 M291.5 166V199 M299.5 182V207 M307.5 186V223 M315.5 178V215 M323.5 166V211 M331.5 194V235 M339.5 190V211 M347.5 198V211 M355.5 198V215 M363.5 206V215 M371.5 202V215 M379.5 202V211 M387.5 198V211 M395.5 202V215 M403.5 202V215 M411.5 198V211 M419.5 202V211 M427.5 206V211 M435.5 206V215 M443.5 210V279 M451.5 250V327 M459.5 254V319 M467.5 274V323 M475.5 266V315 M483.5 254V315 M491.5 270V311 M499.5 234V291 M507.5 246V307 M515.5 234V283 M523.5 242V267 M531.5 250V267 M539.5 254V275 M547.5 250V291 M555.5 250V259 M563.5 246V259 M571.5 242V259 M579.5 242V267 M587.5 254V275 M595.5 238V255 M603.5 242V251 M611.5 210V247 M619.5 210V231 M627.5 222V231 M635.5 222V259 M643.5 242V263 M651.5 218V243 M659.5 246V259 M667.5 250V267 M675.5 210V267 M683.5 210V247 M691.5 242V259 M699.5 250V271 M707.5 226V263 M715.5 234V251 M723.5 218V243 M731.5 234V263 M739.5 238V251 M747.5 238V247 M755.5 242V255 M763.5 250V271 M771.5 270V311 M779.5 290V307 M787.5 266V295 M795.5 266V299 M803.5 226V267 M811.5 238V251 M819.5 238V247 M827.5 230V255 M835.5 246V263 M843.5 246V263 M851.5 254V267 M859.5 250V267 M867.5 246V263 M875.5 254V267 M883.5 258V263 M891.5 250V267 M899.5 234V259 M907.5 218V251 M915.5 210V227 M923.5 210V275" stroke="#00ff00" fill="none"/>
<rect x="225.5" y="262.5" width="4" height="12" fill="#ffffff" stroke="#00ff00" stroke-width="1"/>
<path d="M233 270.5H238" stroke="#00ff00"/>
<rect x="241.5" y="262.5" width="4" height="4" fill="#000000" stroke="#00ff00" stroke-width="1"/>
<rect x="249.5" y="234.5" width="4" height="24" fill="#000000" stroke="#00ff00" stroke-width="1"/>
<rect x="257.5" y="238.5" width="4" height="32" fill="#ffffff" stroke="#00ff00" stroke-width="1"/>
<rect x="265.5" y="266.5" width="4" height="4" fill="#ffffff" stroke="#00ff00" stroke-width="1"/>
<rect x="273.5" y="190.5" width="4" height="76" fill="#000000" stroke="#00ff00" stroke-width="1"/>
<rect x="281.5" y="182.5" width="4" height="4" fill="#000000" stroke="#00ff00" stroke-width="1"/>
<rect x="289.5" y="178.5" width="4" height="20" fill="#ffffff" stroke="#00ff00" stroke-width="1"/>
<rect x="297.5" y="198.5" width="4" height="4" fill="#000000" stroke="#00ff00" stroke-width="1"/>
<rect x="305.5" y="202.5" width="4" height="4" fill="#ffffff" stroke="#00ff00" stroke-width="1"/>
<rect x="313.5" y="182.5" width="4" height="28" fill="#000000" stroke="#00ff00" stroke-width="1"/>
<rect x="321.5" y="178.5" width="4" height="20" fill="#ffffff" stroke="#00ff00" stroke-width="1"/>
<rect x="329.5" y="194.5" width="4" height="12" fill="#ffffff" stroke="#00ff00" stroke-width="1"/>
<rect x="337.5" y="202.5" width="4" height="8" fill="#000000" stroke="#00ff00" stroke-width="1"/>
<rect x="345.5" y="202.5" width="4" height="4" fill="#000000" stroke="#00ff00" stroke-width="1"/>
<rect x="353.5" y="206.5" width="4" height="8" fill="#ffffff" stroke="#00ff00" stroke-width="1"/>
<rect x="361.5" y="210.5" width="4" height="4" fill="#ffffff" stroke="#00ff00" stroke-width="1"/>
<rect x="369.5" y="202.5" width="4" height="8" fill="#000000" stroke="#00ff00" stroke-width="1"/>
<rect x="377.5" y="202.5" width="4" height="4" fill="#000000" stroke="#00ff00" stroke-width="1"/>
<rect x="385.5" y="198.5" width="4" height="8" fill="#ffffff" stroke="#00ff00" stroke-width="1"/>
<rect x="393.5" y="202.5" width="4" height="8" fill="#ffffff" stroke="#00ff00" stroke-width="1"/>
<path d="M401 206.5H406" stroke="#00ff00"/>
<rect x="409.5" y="202.5" width="4" height="4" fill="#000000" stroke="#00ff00" stroke-width="1"/>
<path d="M417 210.5H422" stroke="#00ff00"/>
<path d="M425 210.5H430" stroke="#00ff00"/>
<rect x="433.5" y="210.5" width="4" height="4" fill="#ffffff" stroke="#00ff00" stroke-width="1"/>
<rect x="441.5" y="210.5" width="4" height="60" fill="#ffffff" stroke="#00ff00" stroke-width="1"/>
<rect x="449.5" y="258.5" width="4" height="20" fill="#000000" stroke="#00ff00" stroke-width="1"/>
<rect x="457.5" y="254.5" width="4" height="52" fill="#ffffff" stroke="#00ff00" stroke-width="1"/>
<rect x="465.5" y="298.5" width="4" height="4" fill="#000000" stroke="#00ff00" stroke-width="1"/>
<rect x="473.5" y="282.5" width="4" height="12" fill="#000000" stroke="#00ff00" stroke-width="1"/>
<rect x="481.5" y="274.5" width="4" height="12" fill="#000000" stroke="#00ff00" stroke-width="1"/>
<rect x="489.5" y="278.5" width="4" height="8" fill="#ffffff" stroke="#00ff00" stroke-width="1"/>
<rect x="497.5" y="250.5" width="4" height="40" fill="#000000" stroke="#00ff00" stroke-width="1"/>
<rect x="505.5" y="254.5" width="4" height="20" fill="#ffffff" stroke="#00ff00" stroke-width="1"/>
<rect x="513.5" y="250.5" width="4" height="20" fill="#000000" stroke="#00ff00" stroke-width="1"/>
<rect x="521.5" y="254.5" width="4" height="8" fill="#ffffff" stroke="#00ff00" stroke-width="1"/>
<rect x="529.5" y="258.5" width="4" height="4" fill="#ffffff" stroke="#00ff00" stroke-width="1"/>
<rect x="537.5" y="258.5" width="4" height="12" fill="#ffffff" stroke="#00ff00" stroke-width="1"/>
<rect x="545.5" y="258.5" width="4" height="20" fill="#000000" stroke="#00ff00" stroke-width="1"/>
<path d="M553 254.5H558" stroke="#00ff00"/>
<path d="M561 250.5H566" stroke="#00ff00"/>
<rect x="569.5" y="242.5" width="4" height="12" fill="#000000" stroke="#00ff00" stroke-width="1"/>
<rect x="577.5" y="246.5" width="4" height="16" fill="#ffffff" stroke="#00ff00" stroke-width="1"/>
<rect x="585.5" y="258.5" width="4" height="8" fill="#000000" stroke="#00ff00" stroke-width="1"/>
<rect x="593.5" y="250.5" width="4" height="4" fill="#000000" stroke="#00ff00" stroke-width="1"/>
<rect x="601.5" y="242.5" width="4" height="4" fill="#000000" stroke="#00ff00" stroke-width="1"/>
<rect x="609.5" y="210.5" width="4" height="36" fill="#000000" stroke="#00ff00" stroke-width="1"/>
<rect x="617.5" y="214.5" width="4" height="12" fill="#ffffff" stroke="#00ff00" stroke-width="1"/>
<rect x="625.5" y="222.5" width="4" height="4" fill="#ffffff" stroke="#00ff00" stroke-width="1"/>
<rect x="633.5" y="222.5" width="4" height="28" fill="#ffffff" stroke="#00ff00" stroke-width="1"/>
<rect x="641.5" y="242.5" width="4" height="4" fill="#000000" stroke="#00ff00" stroke-width="1"/>
<rect x="649.5" y="238.5" width="4" height="4" fill="#ffffff" stroke="#00ff00" stroke-width="1"/>
<rect x="657.5" y="246.5" width="4" height="8" fill="#ffffff" stroke="#00ff00" stroke-width="1"/>
<rect x="665.5" y="258.5" width="4" height="4" fill="#ffffff" stroke="#00ff00" stroke-width="1"/>
<rect x="673.5" y="214.5" width="4" height="52" fill="#000000" stroke="#00ff00" stroke-width="1"/>
<rect x="681.5" y="210.5" width="4" height="32" fill="#ffffff" stroke="#00ff00" stroke-width="1"/>
<path d="M689 246.5H694" stroke="#00ff00"/>
<rect x="697.5" y="254.5" width="4" height="4" fill="#ffffff" stroke="#00ff00" stroke-width="1"/>
<rect x="705.5" y="238.5" width="4" height="24" fill="#000000" stroke="#00ff00" stroke-width="1"/>
<rect x="713.5" y="234.5" width="4" height="12" fill="#ffffff" stroke="#00ff00" stroke-width="1"/>
<rect x="721.5" y="234.5" width="4" height="8" fill="#000000" stroke="#00ff00" stroke-width="1"/>
<rect x="729.5" y="238.5" width="4" height="8" fill="#ffffff" stroke="#00ff00" stroke-width="1"/>
<rect x="737.5" y="238.5" width="4" height="8" fill="#000000" stroke="#00ff00" stroke-width="1"/>
<rect x="745.5" y="242.5" width="4" height="4" fill="#ffffff" stroke="#00ff00" stroke-width="1"/>
<path d="M753 246.5H758" stroke="#00ff00"/>
<rect x="761.5" y="254.5" width="4" height="16" fill="#ffffff" stroke="#00ff00" stroke-width="1"/>
<rect x="769.5" y="274.5" width="4" height="28" fill="#ffffff" stroke="#00ff00" stroke-width="1"/>
<rect x="777.5" y="290.5" width="4" height="16" fill="#000000" stroke="#00ff00" stroke-width="1"/>
<rect x="785.5" y="282.5" width="4" height="12" fill="#000000" stroke="#00ff00" stroke-width="1"/>
<rect x="793.5" y="270.5" width="4" height="16" fill="#000000" stroke="#00ff00" stroke-width="1"/>
<rect x="801.5" y="238.5" width="4" height="28" fill="#000000" stroke="#00ff00" stroke-width="1"/>
<path d="M809 242.5H814" stroke="#00ff00"/>
<rect x="817.5" y="242.5" width="4" height="4" fill="#000000" stroke="#00ff00" stroke-width="1"/>
<rect x="825.5" y="246.5" width="4" height="8" fill="#ffffff" stroke="#00ff00" stroke-width="1"/>
<rect x="833.5" y="250.5" width="4" height="8" fill="#000000" stroke="#00ff00" stroke-width="1"/>
<path d="M841 254.5H846" stroke="#00ff00"/>
<rect x="849.5" y="258.5" width="4" height="4" fill="#ffffff" stroke="#00ff00" stroke-width="1"/>
<rect x="857.5" y="254.5" width="4" height="12" fill="#000000" stroke="#00ff00" stroke-width="1"/>
<rect x="865.5" y="250.5" width="4" height="4" fill="#ffffff" stroke="#00ff00" stroke-width="1"/>
<rect x="873.5" y="258.5" width="4" height="4" fill="#ffffff" stroke="#00ff00" stroke-width="1"/>
<rect x="881.5" y="258.5" width="4" height="4" fill="#ffffff" stroke="#00ff00" stroke-width="1"/>
<rect x="889.5" y="254.5" width="4" height="4" fill="#000000" stroke="#00ff00" stroke-width="1"/>
<rect x="897.5" y="238.5" width="4" height="20" fill="#000000" stroke="#00ff00" stroke-width="1"/>
<rect x="905.5" y="226.5" width="4" height="24" fill="#000000" stroke="#00ff00" stroke-width="1"/>
<rect x="913.5" y="214.5" width="4" height="8" fill="#000000" stroke="#00ff00" stroke-width="1"/>
<rect x="921.5" y="218.5" width="4" height="8" fill="#ffffff" stroke="#00ff00" stroke-width="1"/>
</g>
<path d="M227.5 401V413 M235.5 401V412 M251.5 401V407 M259.5 401V402 M275.5 388V400 M283.5 367V400 M291.5 362V400 M299.5 361V400 M347.5 401V421 M355.5 401V417 M371.5 401V415 M379.5 401V413 M387.5 401V411 M395.5 401V409 M403.5 401V405 M411.5 401V405 M483.5 401V457 M491.5 401V436 M499.5 401V413 M507.5 396V400 M515.5 383V400 M523.5 376V400 M555.5 387V400 M563.5 387V400 M571.5 382V400 M579.5 382V400 M587.5 383V400 M611.5 388V400 M619.5 381V400 M627.5 373V400 M675.5 401V409 M683.5 399V400 M699.5 401V402 M707.5 395V400 M795.5 401V431 M803.5 401V415 M811.5 392V400 M819.5 374V400 M827.5 368V400 M875.5 401V409 M883.5 401V405 M891.5 401V402 M899.5 394V400 M907.5 389V400 M915.5 380V400" stroke="#008000" fill="none" clip-path="url(#ca)"/>
<path d="M243.5 401V414 M267.5 401V402 M307.5 362V400 M315.5 376V400 M323.5 401V402 M331.5 401V421 M339.5 401V425 M363.5 401V421 M419.5 401V405 M427.5 401V409 M435.5 401V409 M443.5 401V419 M451.5 401V438 M459.5 401V453 M467.5 401V465 M475.5 401V468 M531.5 378V400 M539.5 383V400 M547.5 389V400 M595.5 386V400 M603.5 392V400 M635.5 377V400 M643.5 381V400 M651.5 391V400 M659.5 401V405 M667.5 401V414 M691.5 401V402 M715.5 398V400 M723.5 401V402 M731.5 401V403 M739.5 401V402 M747.5 401V402 M755.5 401V406 M763.5 401V416 M771.5 401V426 M779.5 401V435 M787.5 401V435 M835.5 371V400 M843.5 387V400 M851.5 401V402 M859.5 401V409 M867.5 401V413 M923.5 381V400" stroke="#ff0000" fill="none" clip-path="url(#ca)"/>
<rect x="226.5" y="108.5" width="716" height="243" stroke="#fff" fill="none"/>
<rect x="226.5" y="353.5" width="716" height="120" stroke="#fff" fill="none"/>
<path d="M943 130.5H946 M943 170.5H946 M943 210.5H946 M943 250.5H946 M943 290.5H946 M943 330.5H946 M943 400.5H946 M227.5 474V477 M291.5 474V477 M355.5 474V477 M419.5 474V477 M483.5 474V477 M547.5 474V477 M611.5 474V477 M675.5 474V477 M739.5 474V477 M803.5 474V477 M867.5 474V477" stroke="#fff" fill="none"/>
<rect x="944" y="220" width="36" height="11" fill="#fff"/>
</svg>
<div class="t" style="left:231px;top:111.96px;font-size:9.5px;line-height:9.5px;color:#fff;letter-spacing:-0.1px;background:#000;padding:1px 0">GBPUSD,M15&nbsp;&nbsp;1.5203 1.5205 1.5189 1.5201</div>
<div class="t" style="left:232px;top:358.96px;font-size:9.5px;line-height:9.5px;color:#fff;letter-spacing:-0.05px;background:#000;padding:1px 0">AC 0.000243</div>
<div class="t" style="left:949px;top:125.03px;font-size:10px;line-height:10px;color:#fff;letter-spacing:-0.5px">1.5225</div>
<div class="t" style="left:949px;top:165.03px;font-size:10px;line-height:10px;color:#fff;letter-spacing:-0.5px">1.5215</div>
<div class="t" style="left:949px;top:205.03px;font-size:10px;line-height:10px;color:#fff;letter-spacing:-0.5px">1.5205</div>
<div class="t" style="left:949px;top:245.03px;font-size:10px;line-height:10px;color:#fff;letter-spacing:-0.5px">1.5195</div>
<div class="t" style="left:949px;top:285.04px;font-size:10px;line-height:10px;color:#fff;letter-spacing:-0.5px">1.5185</div>
<div class="t" style="left:949px;top:325.04px;font-size:10px;line-height:10px;color:#fff;letter-spacing:-0.5px">1.5175</div>
<div class="t" style="left:949px;top:221.03px;font-size:10px;line-height:10px;color:#000;letter-spacing:-0.5px">1.5201</div>
<div class="t" style="left:945px;top:355.04px;font-size:10px;line-height:10px;color:#fff;letter-spacing:-0.5px">0.000541</div>
<div class="t" style="left:945px;top:395.04px;font-size:10px;line-height:10px;color:#fff;letter-spacing:-0.5px">0.00</div>
<div class="t" style="left:945px;top:461.04px;font-size:10px;line-height:10px;color:#fff;letter-spacing:-0.5px">-0.00086</div>
<div class="t" style="left:226px;top:477.96px;font-size:9.5px;line-height:9.5px;color:#fff;letter-spacing:-0.12px">29 Mar 2013</div>
<div class="t" style="left:290px;top:477.96px;font-size:9.5px;line-height:9.5px;color:#fff;letter-spacing:-0.12px">29 Mar 04:00</div>
<div class="t" style="left:354px;top:477.96px;font-size:9.5px;line-height:9.5px;color:#fff;letter-spacing:-0.12px">29 Mar 06:00</div>
<div class="t" style="left:418px;top:477.96px;font-size:9.5px;line-height:9.5px;color:#fff;letter-spacing:-0.12px">29 Mar 08:00</div>
<div class="t" style="left:482px;top:477.96px;font-size:9.5px;line-height:9.5px;color:#fff;letter-spacing:-0.12px">29 Mar 10:00</div>
<div class="t" style="left:546px;top:477.96px;font-size:9.5px;line-height:9.5px;color:#fff;letter-spacing:-0.12px">29 Mar 12:00</div>
<div class="t" style="left:610px;top:477.96px;font-size:9.5px;line-height:9.5px;color:#fff;letter-spacing:-0.12px">29 Mar 14:00</div>
<div class="t" style="left:674px;top:477.96px;font-size:9.5px;line-height:9.5px;color:#fff;letter-spacing:-0.12px">29 Mar 16:00</div>
<div class="t" style="left:738px;top:477.96px;font-size:9.5px;line-height:9.5px;color:#fff;letter-spacing:-0.12px">29 Mar 18:00</div>
<div class="t" style="left:802px;top:477.96px;font-size:9.5px;line-height:9.5px;color:#fff;letter-spacing:-0.12px">29 Mar 20:00</div>
<div class="t" style="left:866px;top:477.96px;font-size:9.5px;line-height:9.5px;color:#fff;letter-spacing:-0.12px">29 Mar 22:00</div>
<div style="left:224px;top:491px;width:760px;height:22px;background:#f0f0f0"></div>
<div style="left:224px;top:491px;width:758px;height:1px;background:#fff"></div>
<div style="left:224px;top:493px;width:758px;height:1px;background:#000"></div>
<div style="left:478px;top:493px;width:84px;height:19px;background:#fff;border:1px solid #000;border-top:none"></div>
<div class="t" style="left:237.5px;top:497.04px;font-size:10px;line-height:10px;color:#6d6d6d;letter-spacing:-0.02px">EURUSD,M15</div>
<div style="left:314px;top:498px;width:1px;height:11px;background:#6d6d6d"></div>
<div class="t" style="left:325px;top:497.04px;font-size:10px;line-height:10px;color:#6d6d6d;letter-spacing:0.3px">#AAPL,M15</div>
<div style="left:394px;top:498px;width:1px;height:11px;background:#6d6d6d"></div>
<div class="t" style="left:404.5px;top:497.04px;font-size:10px;line-height:10px;color:#6d6d6d;letter-spacing:0.1px">USDJPY,M15</div>
<div class="t" style="left:487.5px;top:497.04px;font-size:10px;line-height:10px;color:#000;letter-spacing:-0.2px">GBPUSD,M15</div>
<svg width="24" height="9" style="left:955px;top:499px"><path d="M6 0.5L2 4.5 6 8.5z M17 0.5L21 4.5 17 8.5z" fill="#9a9a9a"/></svg>
<div style="left:223px;top:512px;width:761px;height:1px;background:#a0a0a0"></div>
<div style="left:221px;top:105px;width:1px;height:408px;background:#fff"></div>
<div style="left:222px;top:105px;width:2px;height:407px;background:linear-gradient(90deg,#a8a8a8,#686868)"></div>
<div style="left:222px;top:493px;width:2px;height:1px;background:#000"></div>
<svg width="6" height="5" style="left:12px;top:520px" shape-rendering="crispEdges"><g fill="#000"><rect x="0" y="0" width="1" height="1"/><rect x="1" y="0" width="1" height="1"/><rect x="4" y="0" width="1" height="1"/><rect x="5" y="0" width="1" height="1"/><rect x="1" y="1" width="1" height="1"/><rect x="2" y="1" width="1" height="1"/><rect x="3" y="1" width="1" height="1"/><rect x="4" y="1" width="1" height="1"/><rect x="2" y="2" width="1" height="1"/><rect x="3" y="2" width="1" height="1"/><rect x="1" y="3" width="1" height="1"/><rect x="2" y="3" width="1" height="1"/><rect x="3" y="3" width="1" height="1"/><rect x="4" y="3" width="1" height="1"/><rect x="0" y="4" width="1" height="1"/><rect x="1" y="4" width="1" height="1"/><rect x="4" y="4" width="1" height="1"/><rect x="5" y="4" width="1" height="1"/></g></svg>
<div style="left:9px;top:531px;width:13px;height:103px;background:linear-gradient(#dfe8f2,#b8cadf)"></div>
<div class="t" style="left:-9.5px;top:600px;width:50px;height:13px;font-size:11px;line-height:13px;color:#4a5460;transform:rotate(-90deg);text-align:center;letter-spacing:0.05px">Терминал</div>
<div style="left:23px;top:517px;width:957px;height:96px;border-left:1px solid #a0a0a0;border-top:1px solid #a0a0a0;background:#fff"></div>
<div style="left:24px;top:518px;width:956px;height:22px;background:linear-gradient(#ffffff 0%,#ffffff 45%,#f2f3f5 50%,#f2f3f5 100%)"></div>
<div style="left:95px;top:520px;width:1px;height:19px;background:#e3e3e3"></div>
<div style="left:217px;top:520px;width:1px;height:19px;background:#e3e3e3"></div>
<div style="left:268px;top:520px;width:1px;height:19px;background:#e3e3e3"></div>
<div style="left:307px;top:520px;width:1px;height:19px;background:#e3e3e3"></div>
<div style="left:357px;top:520px;width:1px;height:19px;background:#e3e3e3"></div>
<div style="left:411px;top:520px;width:1px;height:19px;background:#e3e3e3"></div>
<div style="left:466px;top:520px;width:1px;height:19px;background:#e3e3e3"></div>
<div style="left:521px;top:520px;width:1px;height:19px;background:#e3e3e3"></div>
<div style="left:576px;top:520px;width:1px;height:19px;background:#e3e3e3"></div>
<div style="left:631px;top:520px;width:1px;height:19px;background:#e3e3e3"></div>
<div style="left:686px;top:520px;width:1px;height:19px;background:#e3e3e3"></div>
<div style="left:741px;top:520px;width:1px;height:19px;background:#e3e3e3"></div>
<div style="left:802px;top:520px;width:1px;height:19px;background:#e3e3e3"></div>
<div style="left:24px;top:540px;width:956px;height:1px;background:#d5d5d5"></div>
<div class="t" style="left:30.6px;top:525.19px;font-size:11px;line-height:11px;color:#000;letter-spacing:0.15px">Ордер</div>
<svg width="8" height="8" style="left:76px;top:526px"><path d="M1 7.5L4.5 1" stroke="#555" fill="none"/><path d="M4.5 1L7.5 7.5H1" stroke="#e4e4e4" fill="none"/></svg>
<div class="t" style="right:780.5px;top:525.19px;font-size:11px;line-height:11px;color:#000;letter-spacing:0.15px">Время</div>
<div class="t" style="right:730.5px;top:525.19px;font-size:11px;line-height:11px;color:#000;letter-spacing:0.15px">Тип</div>
<div class="t" style="right:586px;top:525.19px;font-size:11px;line-height:11px;color:#000;letter-spacing:0.15px">Цена</div>
<div class="t" style="right:531px;top:525.19px;font-size:11px;line-height:11px;color:#000;letter-spacing:0.15px">S / L</div>
<div class="t" style="right:476px;top:525.19px;font-size:11px;line-height:11px;color:#000;letter-spacing:0.15px">T / P</div>
<div class="t" style="right:421.5px;top:525.19px;font-size:11px;line-height:11px;color:#000;letter-spacing:0.15px">Цена</div>
<div class="t" style="right:256.5px;top:525.19px;font-size:11px;line-height:11px;color:#000;letter-spacing:0.15px">Своп</div>
<div class="t" style="right:311.70000000000005px;top:525.19px;font-size:11px;line-height:11px;color:#000;letter-spacing:0.15px">Налоги</div>
<div class="t" style="right:17.5px;top:525.19px;font-size:11px;line-height:11px;color:#000;letter-spacing:0.35px">Комментарий</div>
<div class="t" style="left:276.5px;top:525.19px;font-size:11px;line-height:11px;color:#000;letter-spacing:0.3px">Об...</div>
<div class="t" style="left:315px;top:525.19px;font-size:11px;line-height:11px;color:#000;letter-spacing:0.3px">Симв...</div>
<div class="t" style="left:584.5px;top:525.19px;font-size:11px;line-height:11px;color:#000;letter-spacing:0.3px">Комис...</div>
<div class="t" style="left:748.3px;top:525.19px;font-size:11px;line-height:11px;color:#000;letter-spacing:0.3px">Прибыль</div>
<div style="left:24px;top:542px;width:956px;height:20px;background:#c8c8c8"></div>
<svg width="9" height="9" style="left:30px;top:547px"><circle cx="4.5" cy="4.5" r="3.6" fill="#b8b8b8" stroke="#8a8a8a"/><circle cx="4" cy="4" r="1.8" fill="#d8d8d8"/></svg>
<div class="t" style="left:49.7px;top:547.03px;font-size:10.6px;line-height:10.6px;color:#000;font-weight:bold">Баланс: 230.97&nbsp;&nbsp;Средства: 230.97&nbsp;&nbsp;Свободно: 230.97</div>
<div class="t" style="right:193px;top:547.03px;font-size:10.6px;line-height:10.6px;color:#000;font-weight:bold">0.00</div>
<div style="left:23px;top:613px;width:957px;height:1px;background:#000"></div>
<div style="left:26px;top:613px;width:67px;height:18px;background:#fff;border:1px solid #000;border-top:none"></div>
<div class="t" style="left:35.5px;top:617.89px;font-size:11px;line-height:11px;color:#000;letter-spacing:0.08px">Торговля</div>
<div class="t" style="left:101.9px;top:617.89px;font-size:11px;line-height:11px;color:#6d6d6d;letter-spacing:0.1px">История Счета</div>
<div class="t" style="left:197.8px;top:617.89px;font-size:11px;line-height:11px;color:#6d6d6d;letter-spacing:0.1px">Новости</div>
<div class="t" style="left:260px;top:617.89px;font-size:11px;line-height:11px;color:#6d6d6d;letter-spacing:0.1px">Сигналы</div>
<div class="t" style="left:323.9px;top:617.89px;font-size:11px;line-height:11px;color:#6d6d6d;letter-spacing:0.1px">Почтовый ящик</div>
<div class="t" style="left:425.5px;top:617.89px;font-size:11px;line-height:11px;color:#6d6d6d;letter-spacing:0.1px">Эксперты</div>
<div class="t" style="left:495.5px;top:617.89px;font-size:11px;line-height:11px;color:#6d6d6d;letter-spacing:0.1px">Журнал</div>
<div style="left:189px;top:618px;width:1px;height:12px;background:#6d6d6d"></div>
<div style="left:251px;top:618px;width:1px;height:12px;background:#6d6d6d"></div>
<div style="left:315px;top:618px;width:1px;height:12px;background:#6d6d6d"></div>
<div style="left:416px;top:618px;width:1px;height:12px;background:#6d6d6d"></div>
<div style="left:486px;top:618px;width:1px;height:12px;background:#6d6d6d"></div>
<div style="left:546px;top:618px;width:1px;height:12px;background:#6d6d6d"></div>
<div style="left:8px;top:637px;width:976px;height:1px;background:#fff"></div>
<div style="left:8px;top:636px;width:976px;height:1px;background:#a0a0a0"></div>
<div class="t" style="left:10px;top:644.35px;font-size:11.4px;line-height:11.4px;color:#000;">Для справки, нажмите F1</div>
<div class="t" style="left:264px;top:644.69px;font-size:11px;line-height:11px;color:#000;">IFX One Click Trading</div>
<div style="left:258px;top:641px;width:1px;height:16px;background:#a0a0a0"></div>
<div style="left:374px;top:641px;width:1px;height:16px;background:#a0a0a0"></div>
<div style="left:476px;top:641px;width:1px;height:16px;background:#a0a0a0"></div>
<div style="left:547px;top:641px;width:1px;height:16px;background:#a0a0a0"></div>
<div style="left:618px;top:641px;width:1px;height:16px;background:#a0a0a0"></div>
<div style="left:686px;top:641px;width:1px;height:16px;background:#a0a0a0"></div>
<div style="left:756px;top:641px;width:1px;height:16px;background:#a0a0a0"></div>
<div style="left:822px;top:641px;width:1px;height:16px;background:#a0a0a0"></div>
<svg width="24" height="12" style="left:828px;top:643px" shape-rendering="crispEdges"><rect x="0" y="0" width="2" height="6" fill="#6a8a10"/><rect x="0" y="8" width="2" height="4" fill="#1a3a6a"/><rect x="3" y="0" width="2" height="6" fill="#6a8a10"/><rect x="3" y="8" width="2" height="4" fill="#1a3a6a"/><rect x="6" y="0" width="2" height="6" fill="#6a8a10"/><rect x="6" y="7" width="2" height="5" fill="#1a3a6a"/><rect x="9" y="0" width="2" height="6" fill="#6a8a10"/><rect x="9" y="7" width="2" height="5" fill="#1a3a6a"/><rect x="12" y="0" width="2" height="6" fill="#6a8a10"/><rect x="12" y="6" width="2" height="6" fill="#1a3a6a"/><rect x="15" y="0" width="2" height="6" fill="#6a8a10"/><rect x="15" y="6" width="2" height="6" fill="#1a3a6a"/><rect x="18" y="0" width="2" height="6" fill="#6a8a10"/><rect x="18" y="6" width="2" height="6" fill="#1a3a6a"/><rect x="21" y="0" width="2" height="6" fill="#6a8a10"/><rect x="21" y="6" width="2" height="6" fill="#1a3a6a"/></svg>
<div class="t" style="left:890.5px;top:644.35px;font-size:11.4px;line-height:11.4px;color:#000;">19/1 kb</div>
<svg width="12" height="12" style="left:971px;top:645px"><path d="M11 1L1 11M11 4L4 11M11 7L7 11M11 10L10 11" stroke="#fff" stroke-width="1"/><path d="M11.5 1.5L1.5 11.5M11.5 4.5L4.5 11.5M11.5 7.5L7.5 11.5" stroke="#a0a0a0" stroke-width="1"/></svg>
</body></html>
